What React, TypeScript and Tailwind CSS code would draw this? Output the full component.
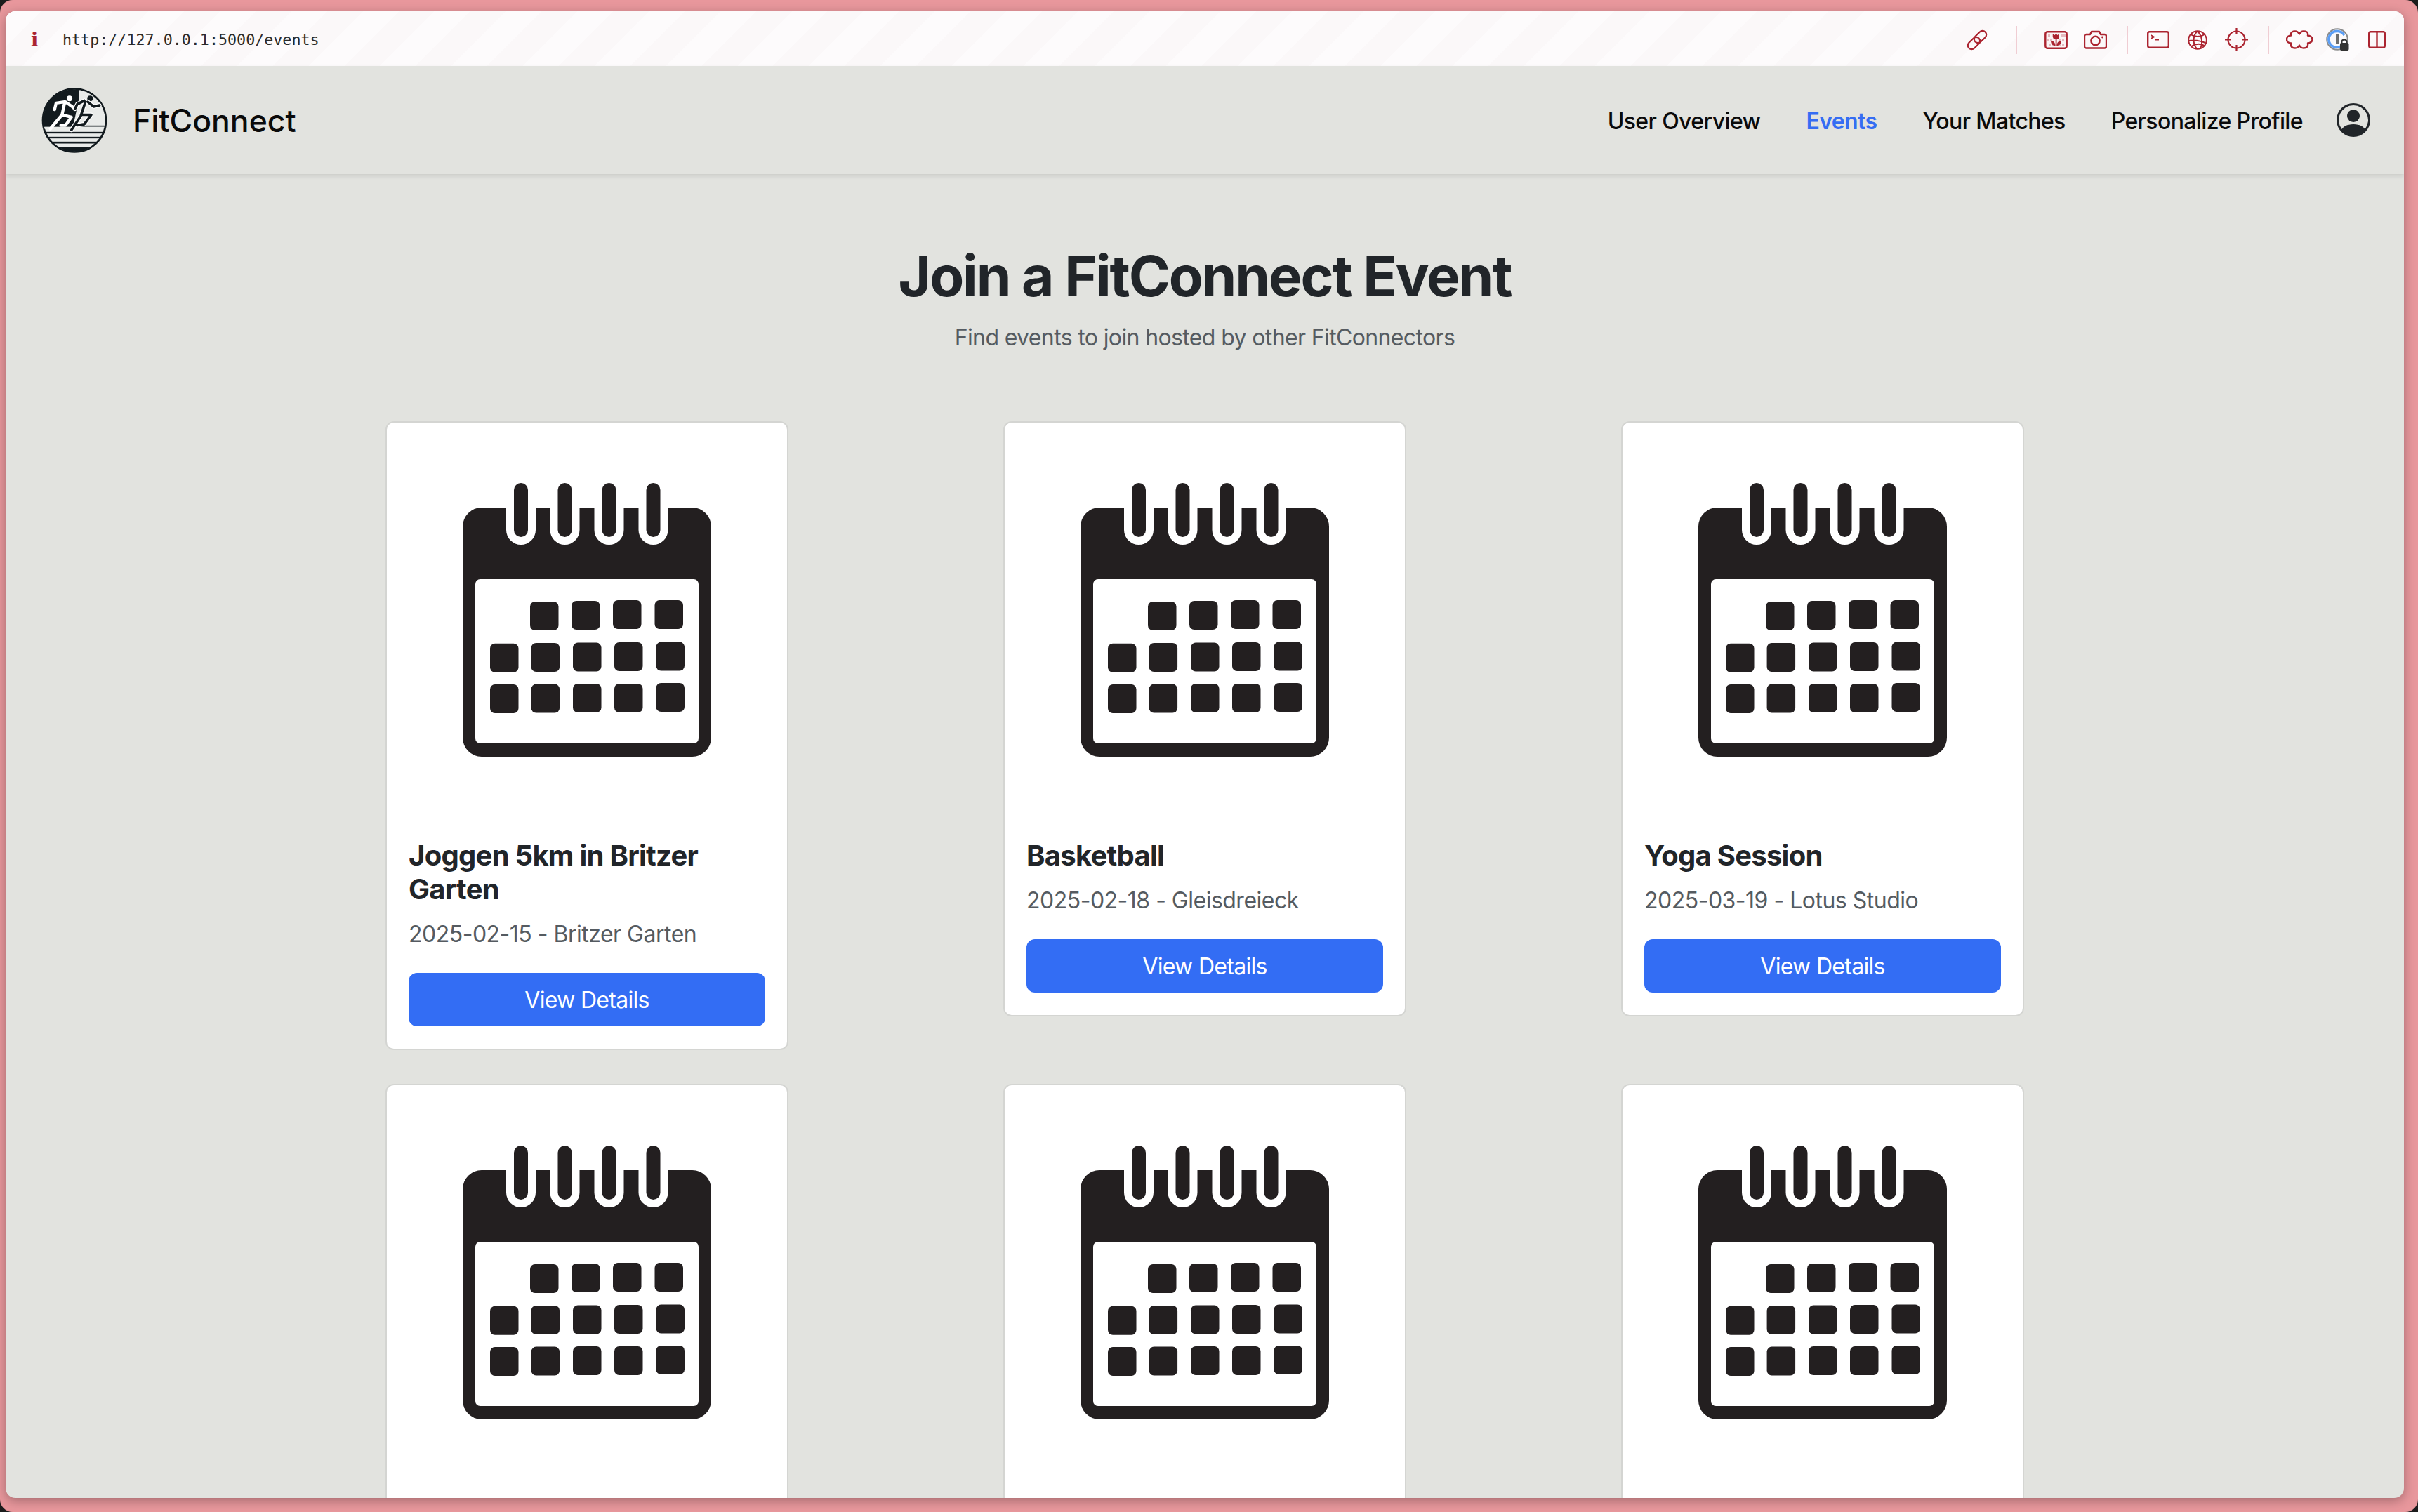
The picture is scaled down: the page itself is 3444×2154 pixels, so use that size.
import { BsPersonCircle } from "react-icons/bs";

const RED = "#AB2430";

// second row is cut off by the window before its text starts
const events = [
  { title: "Joggen 5km in Britzer Garten", meta: "2025-02-15 - Britzer Garten" },
  { title: "Basketball", meta: "2025-02-18 - Gleisdreieck" },
  { title: "Yoga Session", meta: "2025-03-19 - Lotus Studio" },
  { title: "", meta: "" },
  { title: "", meta: "" },
  { title: "", meta: "" },
];

const cells: [number, number][] = [
  [96, 169], [155, 168], [214, 167], [273.5, 167],
  [39, 228.7], [97.6, 228], [157, 227.6], [216, 227], [275.5, 226.6],
  [39, 287], [97.6, 286.6], [157, 286], [216, 286], [275.5, 285],
];

function CalendarIcon() {
  return (
    <svg width="354" height="390" viewBox="0 0 354 390">
      <rect x="0" y="35" width="354" height="355" rx="27" fill="#231F20" />
      <rect x="18" y="137" width="318" height="234" rx="7" fill="#fff" />
      {[83, 145.5, 208.5, 271.5].map((x) => (
        <g key={x}>
          <rect x={x - 21} y="0" width="42" height="88" rx="21" fill="#fff" />
          <rect x={x - 10} y="0" width="20" height="77" rx="10" fill="#231F20" />
        </g>
      ))}
      {cells.map(([x, y]) => (
        <rect key={`${x}-${y}`} x={x} y={y} width="40.5" height="41" rx="7" fill="#231F20" />
      ))}
    </svg>
  );
}

const runnerFront =
  "M183 55L153 70L143 90M198 60L223 80L248 75M188 60L168 120L128 180M173 115L213 115L183 155L153 160";

function Logo() {
  return (
    <svg width="94" height="93" viewBox="0 0 282 278">
      <defs>
        <clipPath id="disc">
          <circle cx="141" cy="139" r="133" />
        </clipPath>
      </defs>
      <circle cx="141" cy="139" r="135" fill="#E9EBE9" stroke="#121A1E" strokeWidth="8" />
      <g clipPath="url(#disc)">
        <path d="M0 0H162V40L135 165H0Z" fill="#121A1E" />
        <rect x="0" y="161" width="282" height="5" fill="#121A1E" />
        <rect x="0" y="168" width="30" height="8" fill="#E9EBE9" />
        <rect x="0" y="188" width="282" height="7" fill="#121A1E" />
        <rect x="0" y="209" width="282" height="7" fill="#121A1E" />
        <rect x="0" y="230" width="282" height="8" fill="#121A1E" />
        <rect x="0" y="254" width="282" height="30" fill="#121A1E" />
      </g>
      <circle cx="120" cy="45" r="12" fill="#fff" />
      <path
        d="M98 60L63 65L56 93M103 60L138 85L158 75M100 60L88 115L38 175M88 115L128 125L103 160L83 160"
        fill="none"
        stroke="#fff"
        strokeWidth="13"
        strokeLinecap="round"
        strokeLinejoin="round"
      />
      <circle cx="208" cy="45" r="12" fill="#121A1E" />
      <path d={runnerFront} fill="none" stroke="#fff" strokeWidth="18" strokeLinecap="round" strokeLinejoin="round" />
      <path d={runnerFront} fill="none" stroke="#121A1E" strokeWidth="11" strokeLinecap="round" strokeLinejoin="round" />
    </svg>
  );
}

function Divider({ className }: { className: string }) {
  return <div className={`w-[2px] h-[40px] bg-[#F0CDD3] ${className}`} />;
}

function Toolbar() {
  return (
    <div className="h-[78px] shrink-0 flex items-center pt-[3px] pl-[36px] bg-[#FCF9FA] bg-[repeating-linear-gradient(135deg,#FDFBFC_0px,#FDFBFC_36px,#FBF8F9_36px,#FBF8F9_72px)]">
      <span className="w-[16px] text-[27px] leading-none font-bold text-[#AB2430] font-['DejaVu_Serif',serif]">i</span>
      <span className="ml-[29px] text-[21.7px] leading-none text-[#2a2a2a] font-['DejaVu_Sans_Mono',monospace]">
        http://127.0.0.1:5000/events
      </span>
      <div className="ml-auto flex items-center">
        {/* link */}
        <svg width="32" height="32" viewBox="0 0 32 32" fill="none" stroke={RED} strokeWidth="2.2">
          <rect x="1.5" y="15" width="20" height="11" rx="5.5" transform="rotate(-45 11.5 20.5)" />
          <rect x="10.5" y="6" width="20" height="11" rx="5.5" transform="rotate(-45 20.5 11.5)" />
        </svg>
        <Divider className="ml-[39px]" />
        {/* screenshot with tulip */}
        <svg className="ml-[39px]" width="33" height="26" viewBox="0 0 33 26">
          <rect x="1.3" y="1.3" width="30.4" height="23.4" rx="3" fill="#FBF4F5" stroke={RED} strokeWidth="2.4" />
          {[5, 11, 23, 27].map((x) => (
            <rect key={x} x={x} y="5" width="3" height="3" fill="#E5B9BE" />
          ))}
          {[4, 8, 25, 21].map((x) => (
            <rect key={x} x={x} y="12" width="3" height="3" fill="#E5B9BE" />
          ))}
          {[6, 11, 21, 25].map((x) => (
            <rect key={x} x={x} y="18" width="3" height="3" fill="#E5B9BE" />
          ))}
          <path d="M12 4L14.5 6L16.5 4L18.5 6L21 4V9C21 11 19 12 16.5 12C14 12 12 11 12 9Z" fill={RED} />
          <rect x="15.7" y="11" width="1.8" height="10" fill={RED} />
          <path d="M9 14C13 14 15.5 17 15.5 21C11.5 21 9 18.5 9 14ZM24 14C20 14 17.5 17 17.5 21C21.5 21 24 18.5 24 14Z" fill={RED} />
        </svg>
        {/* camera */}
        <svg className="ml-[23px]" width="33" height="27" viewBox="0 0 33 27" fill="none" stroke={RED} strokeWidth="2.4">
          <path d="M3.5 6H9L11 2H22L24 6H29.5C31 6 32 7 32 8.5V23C32 24.5 31 25.5 29.5 25.5H3.5C2 25.5 1 24.5 1 23V8.5C1 7 2 6 3.5 6Z" strokeLinejoin="round" />
          <circle cx="16.5" cy="15" r="6.2" />
          <circle cx="26.5" cy="10" r="1.4" fill={RED} stroke="none" />
        </svg>
        <Divider className="ml-[28px]" />
        {/* terminal */}
        <svg className="ml-[27px]" width="32" height="25" viewBox="0 0 32 25" fill="none" stroke={RED} strokeWidth="2.4">
          <rect x="1.2" y="1.2" width="29.6" height="22.6" rx="2.5" />
          <path d="M5.5 6L10 8.5L5.5 11" strokeWidth="1.8" />
          <path d="M11 12.5H17" strokeWidth="1.8" />
        </svg>
        {/* globe */}
        <svg className="ml-[26px]" width="28" height="28" viewBox="0 0 28 28" fill="none" stroke={RED} strokeWidth="1.9">
          <circle cx="14" cy="14" r="12.8" />
          <path d="M14 1.5C8 6 6 18 13 26.5M14 1.5C20 7 22 18 18 26M4 6C10 10 19 10 25 5M1.5 15C9 14 19 15 27 19M5 23C11 19 18 19 24 22" />
        </svg>
        {/* crosshair */}
        <svg className="ml-[25px]" width="33" height="33" viewBox="0 0 33 33" fill="none" stroke={RED} strokeWidth="2.2">
          <circle cx="16.5" cy="16.5" r="12" />
          <path d="M16.5 0V9M16.5 24V33M0 16.5H9M24 16.5H33" />
        </svg>
        <Divider className="ml-[28px]" />
        {/* puzzle piece */}
        <svg className="ml-[24px]" width="38" height="27" viewBox="0 0 38 26" fill="none" stroke={RED} strokeWidth="2.4" strokeLinejoin="round">
          <path d="M7 7C6 2 10 1 13 1C16 1 18 3 19 5C20 3 22 1 25 1C29 1 32 2 31 7C34 7 37.5 9 37.5 12.5C37.5 16 34 18 31 18C32 23 29 25 25 25C22 25 20 23 19 21C18 23 16 25 13 25C9 25 6 23 7 18C4 18 1 16 1 12.5C1 9 4 7 7 7Z" />
        </svg>
        {/* password manager */}
        <svg className="ml-[19px]" width="33" height="33" viewBox="0 0 33 33" fill="none">
          <circle cx="16" cy="16" r="14.8" stroke="#8C8C8C" strokeWidth="2" />
          <path d="M16 4.5A11.5 11.5 0 1 0 21 26" stroke="#5C9EF5" strokeWidth="3.5" />
          <path d="M16 4.5A11.5 11.5 0 0 1 26 10" stroke="#5C9EF5" strokeWidth="3.5" />
          <rect x="14" y="9" width="4" height="14" fill="#6E6E6E" />
          <rect x="20" y="21" width="12.5" height="11" rx="2" fill="#333" />
          <path d="M22.5 21.5V19.5C22.5 15.5 29.5 15.5 29.5 19.5V21.5" stroke="#333" strokeWidth="2" />
        </svg>
        {/* split view */}
        <svg className="ml-[27px] mr-[26px]" width="25" height="25" viewBox="0 0 25 25" fill="none" stroke={RED} strokeWidth="2.4">
          <rect x="1.2" y="1.2" width="22.6" height="22.6" rx="2.5" />
          <path d="M12.5 1V24" />
        </svg>
      </div>
    </div>
  );
}

function Navbar() {
  return (
    <nav className="h-[154px] shrink-0 flex items-center pl-[51px] pr-[48px] relative shadow-[0_3px_6px_rgba(0,0,0,0.1)]">
      <Logo />
      <a className="ml-[36px] pt-[3px] text-[44.5px] leading-none font-medium text-[#0a0a0a]">FitConnect</a>
      <div className="ml-auto flex items-center text-[32px] font-medium tracking-[-0.62px] text-[#0a0a0a]">
        <a className="pt-[3px]">User Overview</a>
        <a className="pt-[3px] ml-[65px] font-semibold text-[#356DF3]">Events</a>
        <a className="pt-[3px] ml-[65px]">Your Matches</a>
        <a className="pt-[3px] ml-[65px]">Personalize Profile</a>
        <BsPersonCircle className="ml-[48px] text-[#212529]" size={48} />
      </div>
    </nav>
  );
}

function EventCard({ title, meta }: { title: string; meta: string }) {
  return (
    <div className="w-[574px] bg-white rounded-[12px] border-2 border-[#D4D5D2]">
      <div className="h-[561px] flex items-center justify-center">
        <CalendarIcon />
      </div>
      {title ? (
        <div className="pt-[32px] px-[31px] pb-[32px]">
          <h5 className="text-[40px] leading-[48px] font-bold tracking-[-0.73px] text-[#212529]">{title}</h5>
          <p className="mt-[14px] mb-[29px] text-[32px] leading-[52px] tracking-[-0.5px] text-[#555B61]">{meta}</p>
          <button className="w-full h-[76px] pt-[2px] rounded-[12px] bg-[#336DF4] text-[32px] tracking-[-0.7px] text-white">View Details</button>
        </div>
      ) : (
        <div className="h-[300px]" />
      )}
    </div>
  );
}

export default function App() {
  return (
    <div className="w-[3444px] h-[2154px] bg-[#1c1c1c] overflow-hidden font-['Inter',sans-serif]">
      <div className="w-full h-full rounded-[18px] bg-[#E8979C] pt-[16px] pl-[8px] pr-[20px] pb-[20px]">
        <div className="w-full h-full rounded-[14px] overflow-hidden flex flex-col bg-[#E2E3DF] shadow-[0_4px_16px_rgba(0,0,0,0.3)]">
          <Toolbar />
          <Navbar />
          <main className="flex-1 min-h-0 overflow-hidden flex flex-col items-center pt-[97px]">
            <h1 className="text-[80px] leading-[96px] font-bold tracking-[-2.15px] text-[#212529]">Join a FitConnect Event</h1>
            <p className="mt-[14px] text-[32px] leading-[52px] tracking-[-0.63px] text-[#555B61]">Find events to join hosted by other FitConnectors</p>
            <div className="mt-[93px] grid grid-cols-[repeat(3,574px)] gap-x-[306px] gap-y-[48px] items-start">
              {events.map((e, i) => (
                <EventCard key={i} title={e.title} meta={e.meta} />
              ))}
            </div>
          </main>
        </div>
      </div>
    </div>
  );
}
